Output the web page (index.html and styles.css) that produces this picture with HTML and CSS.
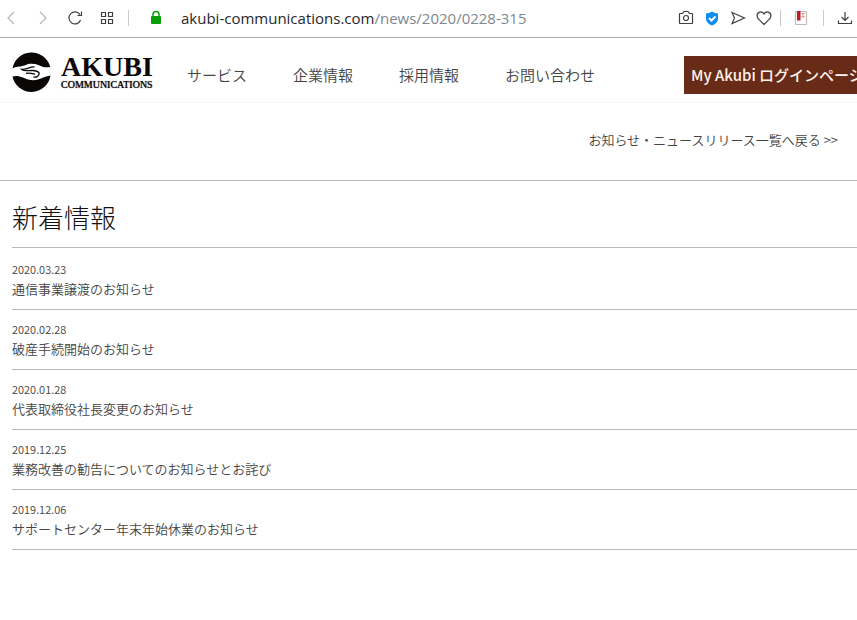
FILE: index.html
```
<!DOCTYPE html>
<html lang="ja">
<head>
<meta charset="utf-8">
<title>新着情報</title>
<link rel="stylesheet" href="styles.css">
</head>
<body>
<div class="toolbar">
  <div class="tools nav-tools">
    <button class="tool dim" aria-label="Back"><svg width="18" height="18" viewBox="0 0 18 18"><path d="M12 3 6 9l6 6"/></svg></button>
    <button class="tool dim" aria-label="Forward"><svg width="18" height="18" viewBox="0 0 18 18"><path d="m6 3 6 6-6 6"/></svg></button>
    <button class="tool" aria-label="Reload"><svg width="18" height="18" viewBox="0 0 18 18"><path d="M14.6 11A6 6 0 1 1 14 5.600M15.500 2.500V6.500H11.500"/></svg></button>
    <button class="tool" aria-label="Speed dial"><svg width="18" height="18" viewBox="0 0 18 18"><path d="M3.500 3.500h4v4h-4zM10.500 3.500h4v4h-4zM3.500 10.500h4v4h-4zM10.500 10.500h4v4h-4z"/></svg></button>
  </div>
  <span class="divider"></span>
  <svg class="lock" width="12" height="16" viewBox="0 0 12 16"><path class="shackle" d="M3 7V4.500a3 3 0 0 1 6 0V7"/><rect x="1" y="6" width="10" height="8" rx="1"/></svg>
  <div class="address">akubi-communications.com<span class="path">/news/2020/0228-315</span></div>
  <div class="tools">
    <button class="tool" aria-label="Snapshot"><svg width="18" height="18" viewBox="0 0 18 18"><path d="M3 4.500H5.500L7 2.500h4l1.500 2H15q.5 0 .5.5v9q0 .5-.5.5H3q-.5 0-.5-.5V5q0-.5.5-.5z"/><circle cx="9" cy="9" r="2.500"/></svg></button>
    <button class="tool" aria-label="Protection"><svg width="18" height="18" viewBox="0 0 18 18"><path class="shield" d="M9 2.500q3 2 6 2v5q0 4.500-6 7-6-2.500-6-7v-5q3 0 6-2z"/><path class="check" d="m6 9 2.500 2.500 4-4"/></svg></button>
    <button class="tool" aria-label="Send"><svg width="18" height="18" viewBox="0 0 18 18"><path d="m3 3.500 12.500 5.500L3 14.500 5.500 9z"/></svg></button>
    <button class="tool" aria-label="Favourite"><svg width="18" height="18" viewBox="0 0 18 18"><path d="M9 15.500 3.700 10.200Q2 8.500 2 6.500A3.700 3.700 0 0 1 9 5a3.700 3.700 0 0 1 7 1.500q0 2-1.700 3.700z"/></svg></button>
  </div>
  <span class="divider near"></span>
  <button class="tool extension" aria-label="Extension"><svg width="18" height="18" viewBox="0 0 18 18"><rect class="page" x="2.500" y="2.500" width="11" height="13" rx="1"/><path class="rule" d="M8 4.500h4M8 7.500h4M10 5v4"/><path class="ribbon" d="M4 2h3.500v9.500H4z"/></svg></button>
  <span class="divider"></span>
  <button class="tool" aria-label="Downloads"><svg width="18" height="18" viewBox="0 0 18 18"><path d="M9 3v8M5.500 8 9 11.500 12.500 8M2.500 11.500v3h13v-3"/></svg></button>
</div>

<header class="site-header">
  <a class="brand" href="#">
    <svg class="mark" width="39" height="40" viewBox="0 0 39 40">
      <path d="M.5 16.500A19.300 19.300 0 0 1 38.200 15C35 15.500 32.500 15.500 30 14.500 26.500 13 24 11.800 19.500 11.800 14.500 11.800 13 14 8 14.500 5 14.800 3 15 .5 16.500z"/>
      <path d="M.5 24.500C4 23.500 7 23.800 11 25.500 15 27.500 20 28.800 25 27.800 30 26.500 32 24.500 38.500 23.500A19.300 19.300 0 0 1 .5 24.500z"/>
      <path class="stream" d="M22.500 15C18 14.500 15 17.500 9.500 17.300 12 19.800 16 18.300 21 18.500 25.500 18.800 28 20.500 27 22.500 26 24.500 23.500 25.500 21.500 25M14 21.300C17.500 20.800 20 21.500 23 22.300"/>
    </svg>
    <span class="brand-text"><span class="brand-name">AKUBI</span><span class="brand-sub">COMMUNICATIONS</span></span>
  </a>
  <nav class="menu">
    <a href="#">サービス</a>
    <a href="#">企業情報</a>
    <a href="#">採用情報</a>
    <a href="#">お問い合わせ</a>
  </nav>
  <a class="login" href="#">My Akubi ログインページ</a>
</header>

<main>
  <div class="back"><a href="#">お知らせ・ニュースリリース一覧へ戻る &gt;&gt;</a></div>
  <section class="news">
    <h1>新着情報</h1>
    <ul>
      <li><time>2020.03.23</time><a href="#">通信事業譲渡のお知らせ</a></li>
      <li><time>2020.02.28</time><a href="#">破産手続開始のお知らせ</a></li>
      <li><time>2020.01.28</time><a href="#">代表取締役社長変更のお知らせ</a></li>
      <li><time>2019.12.25</time><a href="#">業務改善の勧告についてのお知らせとお詫び</a></li>
      <li><time>2019.12.06</time><a href="#">サポートセンター年末年始休業のお知らせ</a></li>
    </ul>
  </section>
</main>
</body>
</html>
```
FILE: styles.css
```
* { box-sizing: border-box; }

body {
  margin: 0;
  background: #fff;
  color: #444;
  font-family: "Noto Sans CJK JP", sans-serif;
  font-weight: 350;
  overflow-x: hidden;
}

a { color: inherit; text-decoration: none; }

.toolbar {
  display: flex;
  align-items: center;
  height: 38px;
  padding: 0 3px 2px 2px;
  border-bottom: 1px solid #b0b2b4;
}

.tools { display: flex; gap: 8px; }
.nav-tools { gap: 14px; }

.tool {
  display: flex;
  padding: 0;
  border: 0;
  background: none;
}

.tool svg {
  fill: none;
  stroke: #3c3f44;
  stroke-width: 1.2;
}

.tool.dim svg { stroke: #b4b6b8; }
.tool .shield { fill: #0a8cf0; stroke: none; }
.tool .check { stroke: #fff; stroke-width: 2; }
.tool .page { fill: #fff; stroke: #c4b8b8; }
.tool .ribbon { fill: #c01824; stroke: none; }
.tool .rule { stroke: #e0a0a4; }

.divider {
  width: 1px;
  height: 16px;
  margin: 0 12px;
  background: #c8cacc;
}

.divider.near { margin-left: 7px; }

.lock { margin: 0 19px 0 9px; fill: #0a9d0a; }
.shackle { fill: none; stroke: #0a9d0a; stroke-width: 1.5; }

.address {
  flex: 1;
  color: #25282c;
  font: 400 15px/20px "Open Sans", sans-serif;
}

.path { color: #7f8790; }

.site-header {
  display: flex;
  align-items: center;
  height: 65px;
  padding: 9px 0 0 12px;
  border-bottom: 1px solid #f7f7f7;
}

.brand {
  display: flex;
  flex: none;
  align-items: center;
  gap: 10px;
  width: 175px;
  padding-bottom: 6px;
  color: #0b0707;
}

.mark { fill: #0b0707; }
.stream { fill: none; stroke: #0b0707; stroke-width: 1.3; }

.brand-text {
  display: flex;
  flex-direction: column;
  gap: 2px;
  padding-top: 4px;
  font-family: "Liberation Serif", serif;
}

.brand-name { font-size: 28px; font-weight: 700; line-height: 20px; }
.brand-sub { font-size: 10px; line-height: 12px; text-shadow: 0 0 1px #0b0707; }

.menu {
  display: flex;
  flex: 1;
  gap: 46px;
  font-size: 15px;
  line-height: 24px;
  white-space: nowrap;
}

.login {
  flex: none;
  width: 173px;
  padding: 7px;
  overflow: hidden;
  background: #682b18;
  color: #fff3ea;
  font-size: 15px;
  font-weight: 500;
  line-height: 24px;
  white-space: nowrap;
}

.back {
  padding: 27px 19px 30px;
  border-bottom: 1px solid #b9b9b9;
  font-size: 13px;
  line-height: 20px;
  text-align: right;
}

.news { padding-left: 12px; }

h1 {
  margin: 0;
  padding: 16px 0 10px;
  border-bottom: 1px solid #b9b9b9;
  color: #111;
  font-size: 26px;
  font-weight: 300;
  line-height: 40px;
}

ul {
  margin: 0;
  padding: 2px 0 0;
  list-style: none;
}

li {
  display: flex;
  flex-direction: column;
  padding: 9px 0 10px;
  border-bottom: 1px solid #b9b9b9;
  font-size: 13px;
  line-height: 20px;
}

time { font-size: 11px; }
```
